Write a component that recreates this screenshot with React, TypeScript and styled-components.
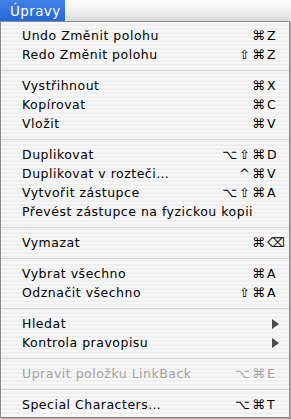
import React from 'react';
import styled, { createGlobalStyle } from 'styled-components';

const Global = createGlobalStyle`
  html, body { margin: 0; padding: 0; background: #ffffff; overflow: hidden; }
  body { font-family: "DejaVu Sans", "Liberation Sans", sans-serif; }
`;

const Screen = styled.div`
  width: 291px;
  height: 419px;
  display: flex;
  flex-direction: column;
  background: #ffffff;
`;

const MenuBar = styled.div`
  height: 21px;
  display: flex;
  background: linear-gradient(#fdfdfd, #efefef 55%, #dadada);
`;

const MenuTitle = styled.div<{ $active?: boolean }>`
  width: 65px;
  height: 21px;
  box-sizing: border-box;
  padding-left: 10px;
  display: flex;
  align-items: center;
  font-size: 13.5px;
  letter-spacing: 0.4px;
  color: ${(p) => (p.$active ? '#ffffff' : '#000000')};
  background: ${(p) => (p.$active ? 'linear-gradient(#3f82e8, #2766d8)' : 'transparent')};
`;

const Menu = styled.div`
  width: 290px;
  box-sizing: border-box;
  border: 1px solid #8a8a8a;
  padding: 4px 0 3px;
  background: repeating-linear-gradient(to bottom, #f7f7f7 0px, #f7f7f7 2px, #efefef 2px, #efefef 4px);
  box-shadow: 1px 1px 1px rgba(0, 0, 0, 0.35);
`;

const Item = styled.div<{ $disabled?: boolean }>`
  height: 19px;
  display: flex;
  align-items: center;
  padding: 0 6px 0 21px;
  font-size: 12.5px;
  letter-spacing: 0.5px;
  color: ${(p) => (p.$disabled ? '#a2a2a2' : '#000000')};
  white-space: nowrap;
`;

const Label = styled.span`
  flex: 1;
`;

const Mods = styled.span`
  text-align: right;
  font-size: 13px;
  letter-spacing: 2px;
`;

const Key = styled.span`
  width: 16px;
  display: flex;
  align-items: center;
`;

const Separator = styled.div`
  height: 1px;
  margin: 6px 0 5px;
  background: #d3d3d3;
`;

const ArrowSvg = styled.svg`
  display: block;
  margin-left: 5px;
`;

const SubArrow = () => (
  <ArrowSvg width="7" height="10" viewBox="0 0 7 10">
    <polygon points="0,0 7,5 0,10" fill="#4a4a4a" />
  </ArrowSvg>
);

type Entry =
  | { sep: true }
  | { sep?: false; label: string; mods?: string; key?: string; sub?: boolean; disabled?: boolean };

const entries: Entry[] = [
  { label: 'Undo Změnit polohu', mods: '⌘', key: 'Z' },
  { label: 'Redo Změnit polohu', mods: '⇧⌘', key: 'Z' },
  { sep: true },
  { label: 'Vystřihnout', mods: '⌘', key: 'X' },
  { label: 'Kopírovat', mods: '⌘', key: 'C' },
  { label: 'Vložit', mods: '⌘', key: 'V' },
  { sep: true },
  { label: 'Duplikovat', mods: '⌥⇧⌘', key: 'D' },
  { label: 'Duplikovat v rozteči…', mods: '^⌘', key: 'V' },
  { label: 'Vytvořit zástupce', mods: '⌥⇧⌘', key: 'A' },
  { label: 'Převést zástupce na fyzickou kopii' },
  { sep: true },
  { label: 'Vymazat', mods: '⌘', key: '⌫' },
  { sep: true },
  { label: 'Vybrat všechno', mods: '⌘', key: 'A' },
  { label: 'Odznačit všechno', mods: '⇧⌘', key: 'A' },
  { sep: true },
  { label: 'Hledat', sub: true },
  { label: 'Kontrola pravopisu', sub: true },
  { sep: true },
  { label: 'Upravit položku LinkBack', mods: '⌥⌘', key: 'E', disabled: true },
  { sep: true },
  { label: 'Special Characters…', mods: '⌥⌘', key: 'T' },
];

export default function App() {
  return (
    <Screen>
      <Global />
      <MenuBar>
        <MenuTitle $active>Úpravy</MenuTitle>
      </MenuBar>
      <Menu>
        {entries.map((e, i) =>
          e.sep ? (
            <Separator key={i} />
          ) : (
            <Item key={i} $disabled={e.disabled}>
              <Label>{e.label}</Label>
              {e.mods && <Mods>{e.mods}</Mods>}
              {(e.key || e.sub) && <Key>{e.sub ? <SubArrow /> : e.key}</Key>}
            </Item>
          )
        )}
      </Menu>
    </Screen>
  );
}
